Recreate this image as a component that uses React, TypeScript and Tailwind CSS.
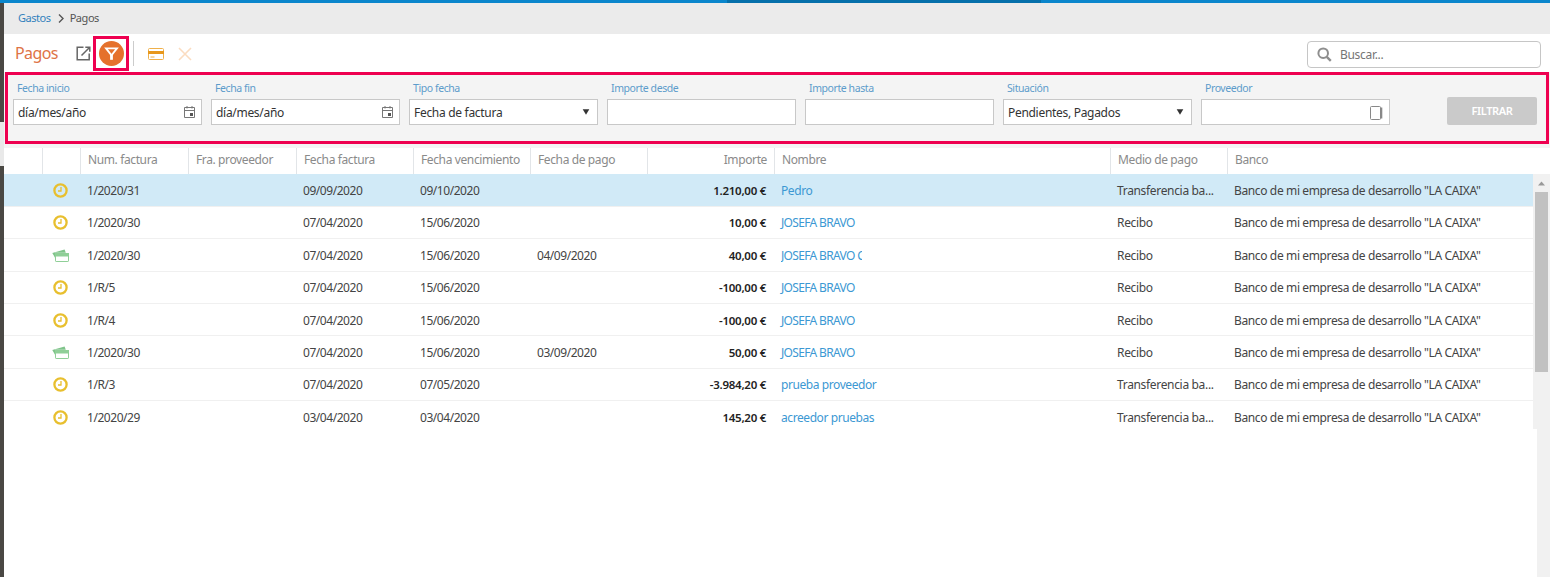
import { ReactNode } from 'react';

interface Payment {
  status: 'pending' | 'paid';
  invoice: string;
  issued: string;
  due: string;
  paidOn?: string;
  amount: string;
  name: string;
  method: string;
}

const BANK = 'Banco de mi empresa de desarrollo "LA CAIXA"';

const payments: Payment[] = [
  { status: 'pending', invoice: '1/2020/31', issued: '09/09/2020', due: '09/10/2020', amount: '1.210,00 €', name: 'Pedro', method: 'Transferencia ba...' },
  { status: 'pending', invoice: '1/2020/30', issued: '07/04/2020', due: '15/06/2020', amount: '10,00 €', name: 'JOSEFA BRAVO', method: 'Recibo' },
  { status: 'paid', invoice: '1/2020/30', issued: '07/04/2020', due: '15/06/2020', paidOn: '04/09/2020', amount: '40,00 €', name: 'JOSEFA BRAVO C', method: 'Recibo' },
  { status: 'pending', invoice: '1/R/5', issued: '07/04/2020', due: '15/06/2020', amount: '-100,00 €', name: 'JOSEFA BRAVO', method: 'Recibo' },
  { status: 'pending', invoice: '1/R/4', issued: '07/04/2020', due: '15/06/2020', amount: '-100,00 €', name: 'JOSEFA BRAVO', method: 'Recibo' },
  { status: 'paid', invoice: '1/2020/30', issued: '07/04/2020', due: '15/06/2020', paidOn: '03/09/2020', amount: '50,00 €', name: 'JOSEFA BRAVO', method: 'Recibo' },
  { status: 'pending', invoice: '1/R/3', issued: '07/04/2020', due: '07/05/2020', amount: '-3.984,20 €', name: 'prueba proveedor', method: 'Transferencia ba...' },
  { status: 'pending', invoice: '1/2020/29', issued: '03/04/2020', due: '03/04/2020', amount: '145,20 €', name: 'acreedor pruebas', method: 'Transferencia ba...' },
];

const headers = [
  '',
  '',
  'Num. factura',
  'Fra. proveedor',
  'Fecha factura',
  'Fecha vencimiento',
  'Fecha de pago',
  'Importe',
  'Nombre',
  'Medio de pago',
  'Banco',
];

const GRID = 'grid grid-cols-[39px_38px_108px_108px_117px_117px_117px_127px_336px_117px_1fr]';

function ClockIcon() {
  return (
    <svg width="15" height="15" viewBox="0 0 15 15" fill="none" stroke="#e8bf2e">
      <circle cx="7.5" cy="7.5" r="6.1" strokeWidth="2.3" />
      <path d="M8 4v4H5" strokeWidth="1.3" />
    </svg>
  );
}

function PaidIcon() {
  return (
    <svg width="17" height="13" viewBox="0 0 17 13">
      <path d="M.3 3.9 12.6.4l1.2 3.3H3v5z" fill="#7fc48a" />
      <rect x="3.5" y="4.5" width="13" height="8" rx="0.6" fill="#fff" stroke="#8fcf97" />
      <path d="M3 4h14v3.5H3z" fill="#8fcf97" />
    </svg>
  );
}

function CalendarIcon() {
  return (
    <svg width="11" height="12" viewBox="0 0 11 12" fill="none" stroke="#777">
      <path d="M.5 1.5h10v10H.5zM.5 4.5h10M3 0v2.5M8 0v2.5" />
      <path d="M6 7h3v3H6z" fill="#555" stroke="none" />
    </svg>
  );
}

function CaretDown() {
  return (
    <svg className="mr-px" width="8" height="6" viewBox="0 0 8 6" fill="#333">
      <path d="M.7.3h6.6L4 5.8z" />
    </svg>
  );
}

function Field({ label, value, children }: { label: string; value?: string; children?: ReactNode }) {
  return (
    <div className="w-[189px]">
      <div className="h-[16px] pt-px pl-[4px] text-[10.5px] leading-[15px] tracking-[-.42px] text-[#5d9ccb]">{label}</div>
      <div className="mt-[3px] flex h-[26px] items-center justify-between border border-[#c8c8c8] bg-white pr-[6px] pl-[4px] text-[12px] tracking-[-.3px] text-[#333]">
        <span className="pt-px">{value}</span>
        {children}
      </div>
    </div>
  );
}

function Toolbar() {
  return (
    <div className="flex h-[38px] items-start bg-white pl-[11px]">
      <h1 className="mt-[8px] w-[61px] text-[16px] leading-[22px] tracking-[-.6px] text-[#de7446]">Pagos</h1>
      <svg className="mt-[12px]" width="15" height="15" viewBox="0 0 15 15" fill="none" stroke="#666" strokeWidth="1.5">
        <path d="M7.5 1.3H1.2v12.4h12V7.5" />
        <path d="M5.5 9.5 13 2M9.3 1.2h4.5v4.5" />
      </svg>
      <div className="mt-[2px] ml-[2px] flex h-[35px] w-[36px] items-center justify-center border-[3px] border-[#ee0050]">
        <div className="flex size-[25px] shrink-0 items-center justify-center rounded-full bg-[#e5712c]">
          <svg width="15" height="15" viewBox="0 0 15 15" fill="none" stroke="#fff">
            <path d="M2 2.3h11L7.5 9.2z" strokeWidth="1.8" />
            <path d="M7.5 8.5v5.3" strokeWidth="2.8" />
          </svg>
        </div>
      </div>
      <div className="mt-[7px] ml-[4px] h-[25px] w-px bg-[#ccc]" />
      <svg className="mt-[14px] ml-[14px]" width="16" height="12" viewBox="0 0 16 12">
        <rect x=".5" y=".5" width="15" height="11" rx="1" fill="#fff" stroke="#efb04a" />
        <path d="M0 3h16v3H0z" fill="#e8981c" />
        <path d="M2.5 9h4" stroke="#efb04a" />
      </svg>
      <svg className="mt-[13px] ml-[14px]" width="14" height="14" viewBox="0 0 14 14" stroke="#fbdcc0" strokeWidth="1.6">
        <path d="m1 1 12 12M13 1 1 13" />
      </svg>
      <div className="mt-[7px] mr-[9px] ml-auto flex h-[27px] w-[234px] items-center rounded-[4px] border border-[#c6c6c6] pl-[9px] text-[12px] tracking-[-.3px] text-[#757575]">
        <svg className="mr-[8px]" width="15" height="15" viewBox="0 0 15 15" fill="none" stroke="#8e8e8e">
          <circle cx="6.2" cy="6.2" r="4.8" strokeWidth="2" />
          <path d="m9.8 9.8 4 4" strokeWidth="2.4" />
        </svg>
        <span>Buscar...</span>
      </div>
    </div>
  );
}

function Filters() {
  return (
    <div className="h-[76px] bg-[#f4f4f4] pr-px pl-px">
      <div className="flex h-[72px] gap-[9px] border-[3px] border-[#ee0050] pt-[5px] pl-[5px]">
        <Field label="Fecha inicio" value="día/mes/año"><CalendarIcon /></Field>
        <Field label="Fecha fin" value="día/mes/año"><CalendarIcon /></Field>
        <Field label="Tipo fecha" value="Fecha de factura"><CaretDown /></Field>
        <Field label="Importe desde" />
        <Field label="Importe hasta" />
        <Field label="Situación" value="Pendientes, Pagados"><CaretDown /></Field>
        <Field label="Proveedor">
          <svg className="mt-px" width="13" height="14" viewBox="0 0 13 14" fill="none" stroke="#888">
            <rect x=".5" y=".5" width="10" height="13" rx="1" />
            <path d="M11.5 1.5v11" strokeWidth="1.6" />
          </svg>
        </Field>
        <button className="mt-[17px] mr-[9px] ml-auto h-[28px] w-[90px] rounded-[2px] bg-[#cacaca] text-[11px] font-semibold tracking-[-.35px] text-white">
          FILTRAR
        </button>
      </div>
    </div>
  );
}

function PaymentsTable() {
  return (
    <div className="text-[12px] tracking-[-.45px] text-[#444]">
      <div className={`${GRID} h-[26.4px] pr-[17px] tracking-[-.38px] text-[#8a8a8a]`}>
        {headers.map((header, i) => (
          <div
            key={i}
            className={`flex items-center border-[#e2e5e8] pb-[2px] whitespace-nowrap ${i < 10 ? 'border-r' : ''} ${
              header === 'Importe' ? 'justify-end pr-[7px]' : 'pl-[7px]'
            }`}
          >
            {header}
          </div>
        ))}
      </div>
      <div className="flex h-[255px]">
        <div className="flex-1">
          {payments.map((payment, i) => (
            <div
              key={i}
              className={`${GRID} h-[32.4px] items-center pt-[2px] whitespace-nowrap ${i === 0 ? 'bg-[#d1eaf7]' : ''} ${
                i < payments.length - 1 ? 'border-b border-[#f0f0f0]' : ''
              }`}
            >
              <div />
              <div className="flex justify-center pr-[3px] pb-px">
                {payment.status === 'pending' ? <ClockIcon /> : <PaidIcon />}
              </div>
              <div className="pl-[6px]">{payment.invoice}</div>
              <div />
              <div className="pl-[6px]">{payment.issued}</div>
              <div className="pl-[6px]">{payment.due}</div>
              <div className="pl-[6px]">{payment.paidOn}</div>
              <div className="pr-[9px] pb-px text-right text-[11.5px] font-semibold tracking-[-.27px] text-[#222]">{payment.amount}</div>
              <div className={`pl-[6px] text-[#3c98d3] ${payment.name.startsWith('JOSEFA') ? 'tracking-[-.66px]' : 'tracking-[-.42px]'}`}>
                <div className={payment.name.endsWith(' C') ? 'w-[81px] overflow-hidden' : ''}>{payment.name}</div>
              </div>
              <div className="pl-[6px] tracking-[-.33px]">{payment.method}</div>
              <div className="pl-[6px] tracking-[-.37px]">{BANK}</div>
            </div>
          ))}
        </div>
        <div className="flex w-[17px] flex-col items-center bg-[#f1f1f1]">
          <svg className="mt-[7px] mb-[6px]" width="7" height="5" viewBox="0 0 7 5" fill="#999">
            <path d="M3.5.5 7 4.5H0z" />
          </svg>
          <div className="h-[180px] w-[13px] bg-[#c1c1c1]" />
        </div>
      </div>
    </div>
  );
}

export default function App() {
  return (
    <div className="flex h-[577px] w-[1550px] flex-col overflow-hidden bg-white font-['Noto_Sans',sans-serif]">
      <div className="flex h-[3px] bg-[#0a86cc]">
        <div className="ml-[727px] w-[314px] bg-[#0670ab]" />
      </div>
      <div className="flex flex-1">
        <div className="flex w-[4px] flex-col bg-[#4a4844]">
          <div className="mt-[119px] h-[44px] bg-[#e9e9e9]" />
        </div>
        <div className="flex flex-1 flex-col">
          <div className="flex h-[31px] items-center bg-[#ebebeb] pl-[14px] text-[11px] tracking-[-.45px]">
            <span className="text-[#3382bd]">Gastos</span>
            <svg className="mr-[6px] ml-[7px]" width="6" height="9" viewBox="0 0 6 9" fill="none" stroke="#555" strokeWidth="1.4">
              <path d="m1 .5 4 4-4 4" />
            </svg>
            <span className="text-[#555]">Pagos</span>
          </div>
          <Toolbar />
          <Filters />
          <PaymentsTable />
          <div className="ml-auto w-[13px] flex-1 bg-[#f1f1f1]" />
        </div>
      </div>
    </div>
  );
}
